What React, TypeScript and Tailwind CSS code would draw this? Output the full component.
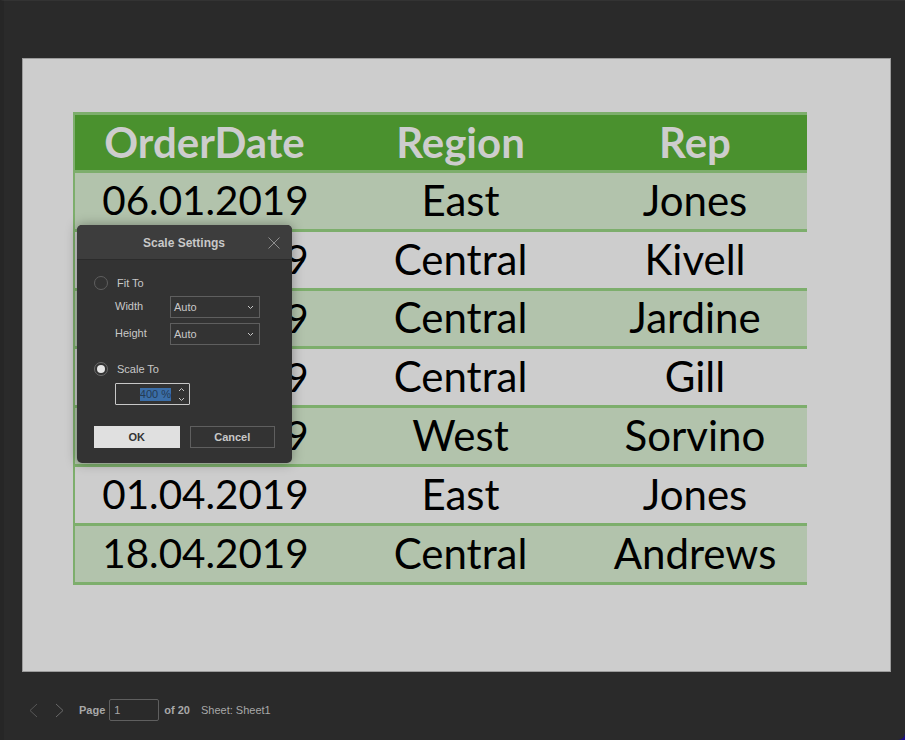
import { useState } from "react";

const rows = [
    { date: "06.01.2019", region: "East", rep: "Jones" },
    { date: "23.01.2019", region: "Central", rep: "Kivell" },
    { date: "09.02.2019", region: "Central", rep: "Jardine" },
    { date: "26.02.2019", region: "Central", rep: "Gill" },
    { date: "15.03.2019", region: "West", rep: "Sorvino" },
    { date: "01.04.2019", region: "East", rep: "Jones" },
    { date: "18.04.2019", region: "Central", rep: "Andrews" },
];

const Chevron = () => (
    <svg width="7" height="5" viewBox="0 0 7 5" fill="none" stroke="#c8c8c8" strokeWidth="1">
        <path d="M1 1l2.5 2.5L6 1" />
    </svg>
);

const SelectBox = ({ value }: { value: string }) => (
    <div className="w-[90px] h-[22px] border border-[#5f5f5f] flex items-center justify-between pl-[3px] pr-[5px] text-[#c8c8c8] text-[11px]">
        <span>{value}</span>
        <Chevron />
    </div>
);

const Radio = ({ checked }: { checked: boolean }) => (
    <div className={`w-[14px] h-[14px] rounded-full border flex items-center justify-center ${checked ? "border-[#6b6b6b]" : "border-[#5f5f5f]"}`}>
        {checked && <div className="w-[8px] h-[8px] rounded-full bg-[#e6e6e6]" />}
    </div>
);

function ScaleDialog() {
    return (
        <div className="absolute left-[77px] top-[225px] w-[215px] h-[238px] rounded-[5px] bg-[#333333] shadow-[0_0_12px_rgba(0,0,0,0.35)] flex flex-col font-['Liberation_Sans',sans-serif]">
            <div className="h-[35px] shrink-0 rounded-t-[5px] bg-[#3d3d3d] border-b border-[#2b2b2b] flex items-center justify-center relative pt-[2px]">
                <span className="text-[12px] font-bold text-[#c8c8c8] ml-[-1px]">Scale Settings</span>
                <svg className="absolute right-[12px] top-[12px]" width="12" height="12" viewBox="0 0 12 12" stroke="#8f8f8f" strokeWidth="1" fill="none">
                    <path d="M0.5 0.5l11 11M11.5 0.5l-11 11" />
                </svg>
            </div>
            <div className="px-[17px] pt-[16px] flex flex-col">
                <div className="flex items-center gap-[9px] h-[14px] text-[11px] text-[#c8c8c8]">
                    <Radio checked={false} />
                    <span>Fit To</span>
                </div>
                <div className="flex items-center mt-[6px] pl-[21px] text-[11px] text-[#c8c8c8]">
                    <span className="w-[55px] mt-[-2px]">Width</span>
                    <SelectBox value="Auto" />
                </div>
                <div className="flex items-center mt-[5px] pl-[21px] text-[11px] text-[#c8c8c8]">
                    <span className="w-[55px] mt-[-2px]">Height</span>
                    <SelectBox value="Auto" />
                </div>
                <div className="flex items-center gap-[9px] h-[14px] mt-[17px] text-[11px] text-[#c8c8c8]">
                    <Radio checked={true} />
                    <span>Scale To</span>
                </div>
                <div className="ml-[21px] mt-[7px] w-[75px] h-[22px] border border-[#c8c8c8] rounded-[1px] flex items-center justify-end pr-[4px] text-[11px]">
                    <span className="bg-[#3b6ea8] text-[#243b55] leading-[13px] mr-[7px]">400 %</span>
                    <div className="flex flex-col gap-[5px] items-center">
                        <svg width="7" height="5" viewBox="0 0 7 5" fill="none" stroke="#c8c8c8" strokeWidth="1"><path d="M1 4l2.5-2.5L6 4" /></svg>
                        <svg width="7" height="5" viewBox="0 0 7 5" fill="none" stroke="#c8c8c8" strokeWidth="1"><path d="M1 1l2.5 2.5L6 1" /></svg>
                    </div>
                </div>
                <div className="flex gap-[10px] mt-[21px]">
                    <button className="w-[86px] h-[22px] bg-[#e0e0e0] text-[#333333] text-[11px] font-bold">OK</button>
                    <button className="w-[86px] h-[22px] border border-[#5f5f5f] text-[#c8c8c8] text-[11px] font-bold">Cancel</button>
                </div>
            </div>
        </div>
    );
}

export default function App() {
    const [page] = useState("1");

    return (
        <div className="w-[905px] h-[740px] bg-[#1c0c8c]">
            <div className="relative w-full h-full bg-[#2a2a2a] rounded-br-[7px] flex flex-col overflow-hidden border-t border-[#333333] border-l-[4px] border-l-[#262626]">
                <div className="flex-1 flex pl-[18px] pt-[57px]">
                    <div className="w-[869px] h-[614px] bg-[#cdcdcd] border border-[#9b9b9b] pl-[50px] pt-[53px] font-['Lato',sans-serif]">
                        <div className="w-[734px] border-l-2 border-[#7dae6c]">
                            <div className="grid grid-cols-[259px_253px_216px] h-[61px] pb-[1px] bg-[#4a912e] border-t-[3px] border-b-[3px] border-[#7dae6c] text-[#cdcdcd] text-[42px] font-bold items-center text-center leading-none">
                                <div>OrderDate</div>
                                <div>Region</div>
                                <div>Rep</div>
                            </div>
                            {rows.map((row, index) => (
                                <div
                                    key={index}
                                    className={`grid grid-cols-[259px_253px_216px] h-[58.8px] pb-[2px] border-b-[3px] border-[#7dae6c] text-black text-[42px] items-center text-center leading-none ${index % 2 === 0 ? "bg-[#b2c3ac]" : "bg-[#cdcdcd]"}`}
                                >
                                    <div className="text-[40.4px] pt-[1px] pl-[2px]">{row.date}</div>
                                    <div>{row.region}</div>
                                    <div>{row.rep}</div>
                                </div>
                            ))}
                        </div>
                    </div>
                </div>
                <div className="h-[68px] flex items-start pt-[27px] pl-[24px] font-['Liberation_Sans',sans-serif] text-[11px] text-[#a8a8a8]">
                    <svg className="mt-[4px]" width="10" height="15" viewBox="0 0 10 15" fill="none" stroke="#585858" strokeWidth="1"><path d="M9 1L2 7.5 9 14" /></svg>
                    <svg className="mt-[4px] ml-[17px]" width="10" height="15" viewBox="0 0 10 15" fill="none" stroke="#6a6a6a" strokeWidth="1"><path d="M1 1l7 6.5L1 14" /></svg>
                    <span className="ml-[14px] font-bold mt-[3px]">Page</span>
                    <div className="ml-[4px] w-[50px] h-[22px] border border-[#5f5f5f] rounded-[2px] flex items-center pl-[4px]">{page}</div>
                    <span className="ml-[5px] font-bold mt-[3px]">of 20</span>
                    <span className="ml-[11px] mt-[3px]">Sheet: Sheet1</span>
                </div>
                <div className="absolute left-[-4px] top-[-1px]"><ScaleDialog /></div>
            </div>
        </div>
    );
}
